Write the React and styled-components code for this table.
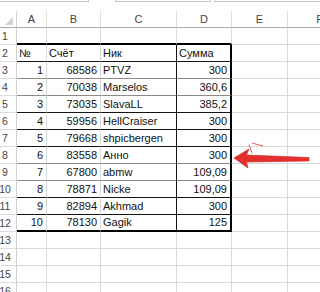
import React from "react";
import styled, { createGlobalStyle } from "styled-components";

const GlobalStyle = createGlobalStyle`
  html, body { margin: 0; padding: 0; background: #fff; }
  body { font-family: "Liberation Sans", Arial, sans-serif; }
`;

const Page = styled.div`
  position: relative;
  width: 320px;
  height: 292px;
  overflow: hidden;
  background: #fff;
`;

const TopStrip = styled.div`
  display: flex;
  height: 2px;
`;

const StripBox = styled.div`
  box-sizing: border-box;
  width: ${(p) => p.$w}px;
  flex: ${(p) => (p.$grow ? "1" : "none")};
  border-bottom: ${(p) => (p.$blank ? "none" : "1px solid #c6c6c6")};
  border-left: ${(p) => (p.$left ? "1px solid #c6c6c6" : "none")};
  border-right: ${(p) => (p.$right ? "1px solid #c6c6c6" : "none")};
`;

const Sheet = styled.div`
  display: grid;
  margin-top: 9px;
  grid-template-columns: 17px 30px 54px 76px 55px 56px 64px;
  grid-auto-rows: 17px;
`;

const Corner = styled.div`
  position: relative;
  box-sizing: border-box;
  border-right: 1px solid #d4d4d4;
  border-bottom: 1px solid #ababab;
  &::after {
    content: "";
    position: absolute;
    right: 3px;
    bottom: 2px;
    width: 0;
    height: 0;
    border-left: 8px solid transparent;
    border-bottom: 8px solid #d2d2d2;
  }
`;

const ColHead = styled.div`
  box-sizing: border-box;
  display: flex;
  align-items: center;
  justify-content: center;
  border-right: 1px solid #dedede;
  border-bottom: 1px solid #ababab;
  font-size: 11px;
  color: #444;
`;

const RowHead = styled.div`
  box-sizing: border-box;
  display: flex;
  align-items: flex-end;
  justify-content: center;
  padding: 0 6px 1px 0;
  border-right: 1px solid #d0d0d0;
  border-bottom: 1px solid #dcdcdc;
  font-size: 10.5px;
  line-height: 13px;
  color: #444;
`;

const Cell = styled.div`
  box-sizing: border-box;
  display: flex;
  align-items: flex-end;
  justify-content: ${(p) => (p.$align === "right" ? "flex-end" : "flex-start")};
  padding: ${(p) => (p.$align === "right" ? "0 3px 1px 0" : "0 0 1px 2px")};
  border-right: ${(p) => p.$right};
  border-bottom: ${(p) => p.$bottom};
  font-size: 11px;
  line-height: 13px;
  color: #111;
  white-space: nowrap;
`;

const ArrowLayer = styled.svg`
  position: absolute;
  left: 0;
  top: 0;
  pointer-events: none;
`;

const B = {
  grid: "1px solid #d9d9d9",
  black: "1px solid #141414",
  gray: "1px solid #8a8a8a",
  thick: "2px solid #000",
  thickR: "2px solid #000",
};

const data = [
  ["", "", "", ""],
  ["№", "Счёт", "Ник", "Сумма"],
  ["1", "68586", "PTVZ", "300"],
  ["2", "70038", "Marselos", "360,6"],
  ["3", "73035", "SlavaLL", "385,2"],
  ["4", "59956", "HellCraiser", "300"],
  ["5", "79668", "shpicbergen", "300"],
  ["6", "83558", "Анно", "300"],
  ["7", "67800", "abmw", "109,09"],
  ["8", "78871", "Nicke", "109,09"],
  ["9", "82894", "Akhmad", "300"],
  ["10", "78130", "Gagik", "125"],
];

// bottom edge style of each table row (rows 1..12)
const rowEdge = {
  1: "thick",
  2: "black",
  3: "gray",
  4: "gray",
  5: "black",
  6: "black",
  7: "black",
  8: "gray",
  9: "gray",
  10: "black",
  11: "black",
  12: "thick",
};

const cols = ["A", "B", "C", "D", "E", "F"];
const TOTAL_ROWS = 16;

function cellBorders(r, c) {
  const inTable = r >= 1 && r <= 12 && c <= 3;
  const bottom = inTable ? B[rowEdge[r]] : B.grid;
  let right = B.grid;
  if (r >= 2 && r <= 12) {
    if (c === 2) right = B.black;
    if (c === 3) right = B.thickR;
  }
  return { bottom, right };
}

function alignFor(r, c) {
  if (r <= 2) return "left";
  if (c === 2) return "left";
  return "right";
}

export default function App() {
  const rows = [];
  for (let r = 1; r <= TOTAL_ROWS; r++) rows.push(r);
  return (
    <Page>
      <GlobalStyle />
      <TopStrip>
        <StripBox $w={89} $right />
        <StripBox $w={26} $blank />
        <StripBox $w={96} $left $right />
        <StripBox $w={3} $blank />
        <StripBox $grow $left />
      </TopStrip>
      <Sheet>
        <Corner />
        {cols.map((c) => (
          <ColHead key={c}>{c}</ColHead>
        ))}
        {rows.map((r) => (
          <React.Fragment key={r}>
            <RowHead>{r}</RowHead>
            {cols.map((c, ci) => {
              const { bottom, right } = cellBorders(r, ci);
              const text = data[r - 1] && ci < 4 ? data[r - 1][ci] : "";
              return (
                <Cell
                  key={c}
                  $bottom={bottom}
                  $right={right}
                  $align={alignFor(r, ci)}
                >
                  {text}
                </Cell>
              );
            })}
          </React.Fragment>
        ))}
      </Sheet>
      <ArrowLayer width="320" height="292" viewBox="0 0 320 292">
        <polygon
          points="234,158 249,149 246.5,155 309,157.5 309,161 246.5,162 248,168"
          fill="#e3302f"
          stroke="#c92020"
          strokeWidth="0.6"
          strokeLinejoin="round"
        />
        <line x1="252" y1="143" x2="263" y2="146" stroke="#e85a5a" strokeWidth="1" />
        <line x1="249" y1="144.5" x2="252" y2="153" stroke="#e85a5a" strokeWidth="1" />
      </ArrowLayer>
    </Page>
  );
}
